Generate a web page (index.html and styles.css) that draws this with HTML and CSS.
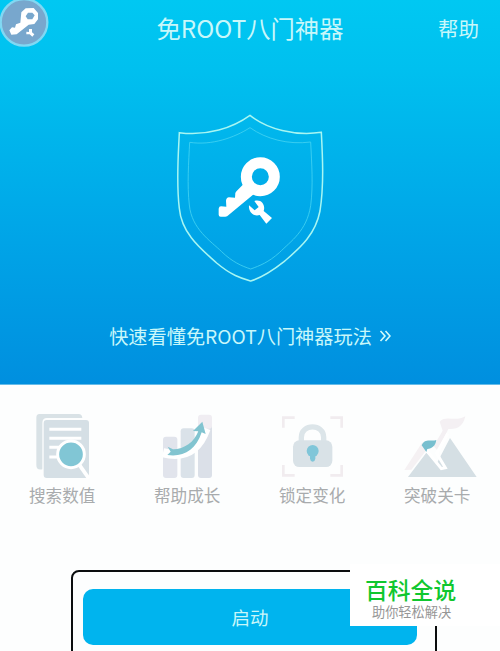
FILE: index.html
```html
<!DOCTYPE html>
<html lang="zh-CN">
<head>
    <meta charset="UTF-8">
    <meta name="viewport" content="width=device-width, initial-scale=1.0">
    <title>免ROOT八门神器</title>
    <link rel="stylesheet" href="styles.css">
</head>
<body>
    <div class="hero">
        <header class="topbar">
            <h1>免ROOT八门神器</h1>
            <a class="help">帮助</a>
        </header>

        <svg class="shield" viewBox="0 0 510 555" fill="none">
            <path d="M255 31C204 68 127 94 43 83C40 150 33 230 43 310C50 390 116 438 155 474C200 512 230 520 257 528C283 520 313 505 357 470C397 435 450 395 465 318C477 240 473 160 469 82C390 94 306 72 255 31Z" stroke="#a8f6f2" stroke-width="4.5"/>
            <path d="M255 68C208 98 140 122 74 112C71 170 66 240 73 300C80 372 137 408 170 440C202 471 230 483 257 492C285 482 310 472 343 443C378 408 425 378 437 302C445 240 440 175 437 111C370 120 303 102 255 68Z" stroke="#43d3f2" stroke-width="2.5"/>
            <circle cx="286" cy="215" r="42" stroke="#fff" stroke-width="33"/>
            <path d="M235 238L266 268L190 331Q187 335 181 335H167Q161 335 161 329V311Q162 304 168 304L184 305L183 287Q184 278 192 277L210 278L211 264Q213 259 218 255Z" fill="#fff"/>
            <path d="M268 288C290 281 302 301 296 318L321 339L304 356L284 330C266 336 250 321 252 301L269 316L281 306Z" fill="#fff"/>
        </svg>

        <a class="guide">快速看懂免ROOT八门神器玩法
            <svg viewBox="0 0 12 12" fill="none"><path d="M1.5 1L6 6L1.5 11M6.5 1L11 6L6.5 11" stroke="#d2fbfa" stroke-width="1.6"/></svg>
        </a>

        <svg class="app-icon" viewBox="0 0 147 141" fill="none">
            <circle cx="72" cy="67" r="70" fill="#78a7cd" stroke="#81d8f3" stroke-width="7"/>
            <path d="M77 25L101 24L114 39V58L103 72L86 74L50 103L34 104L28 91L36 82L45 83L48 73L61 68L64 37Z" fill="#fff"/>
            <path d="M84 38L97 38L104 46L97 58H83L77 49Z" fill="#78a7cd"/>
            <path d="M87 87H96V97L103 103L97 110L89 103H79V95L87 96Z" fill="#fff"/>
        </svg>
    </div>

    <ul class="features">
        <li>
            <svg viewBox="0 0 300 225" fill="none">
                <path d="M58 27H176Q186 27 187 39H81Q67 39 67 54V193Q49 197 49 180V38Q49 27 58 27Z" fill="#d9e2e6"/>
                <rect x="71" y="45" width="136" height="174" rx="9" fill="#d5dfe5"/>
                <path d="M88 73H184M88 100H184M88 127H130M88 156H130" stroke="#fff" stroke-width="9"/>
                <circle cx="153" cy="148" r="40" fill="#81c6d5" stroke="#fff" stroke-width="9"/>
                <path d="M177 178L207 221" stroke="#fff" stroke-width="11"/>
            </svg>
            <span>搜索数值</span>
        </li>
        <li>
            <svg viewBox="0 0 300 225" fill="none">
                <rect x="54" y="95" width="43" height="124" rx="9" fill="#e1e4ec"/>
                <rect x="107" y="70" width="42" height="149" rx="9" fill="#dae2e9"/>
                <rect x="159" y="50" width="42" height="169" rx="9" fill="#dbe0e8"/>
                <rect x="159" y="29" width="42" height="42" rx="9" fill="#f0edf2"/>
                <path d="M54 143C116 158 160 135 183 70" stroke="#fff" stroke-width="28"/>
                <path d="M68 125L84 133C118 133 148 111 160 79L144 78L172 50L182 87L170 82C153 137 113 157 67 150L77 140Z" fill="#82c4d0"/>
            </svg>
            <span>帮助成长</span>
        </li>
        <li>
            <svg viewBox="0 0 300 225" fill="none">
                <path d="M40 68V38H74M181 38H215V68M215 180V211H181M74 211H40V180" stroke="#f1ecef" stroke-width="8"/>
                <path d="M94 112V97C94 55 161 55 161 97V112" stroke="#dce5e9" stroke-width="16"/>
                <rect x="69" y="106" width="118" height="80" rx="19" fill="#d9e2e7"/>
                <circle cx="128" cy="138" r="18" fill="#80c6d9"/>
                <path d="M120 148H136V161Q135 169 128 170Q121 169 120 161Z" fill="#80c6d9"/>
            </svg>
            <span>锁定变化</span>
        </li>
        <li>
            <svg viewBox="0 0 300 225" fill="none">
                <path d="M28 195L82 112L94 136L49 194Z" fill="#f5f1f3"/>
                <path d="M39 216L94 143L126 174L165 99L245 216Z" fill="#d5dfe4"/>
                <path d="M134 50C154 29 180 52 211 34C204 62 191 74 160 72L128 137L116 123L143 77Z" fill="#f4f0f3"/>
                <path d="M96 138L139 191L151 188L125 145L158 86" stroke="#fff" stroke-width="9"/>
                <path d="M80 121C90 98 108 111 124 105C121 124 111 130 97 132L94 141Z" fill="#78bfcf"/>
            </svg>
            <span>突破关卡</span>
        </li>
    </ul>

    <div class="start-frame">
        <button class="start">启动</button>
    </div>

    <div class="brand">
        <strong>百科全说</strong>
        <span>助你轻松解决</span>
    </div>
</body>
</html>
```

FILE: styles.css
```css
* {
    box-sizing: border-box;
}
body {
    position: relative;
    height: 651px;
    margin: 0;
    overflow: hidden;
    background-color: #fdfefe;
    font-family: "Noto Sans CJK SC", sans-serif;
    font-weight: 400;
}
.hero {
    position: relative;
    display: flex;
    flex-direction: column;
    align-items: center;
    height: 385px;
    background: linear-gradient(#00c8f2 0%, #00c0ef 18%, #00a7e8 58%, #008fdf 100%);
    border-bottom: 1px solid #65bce9;
    color: #c8f7fa;
}
.topbar {
    display: grid;
    grid-template-columns: 1fr auto 1fr;
    align-items: center;
    width: 100%;
    height: 56px;
    padding: 0 21px;
}
.topbar h1 {
    grid-column: 2;
    margin: 0;
    font-size: 24.3px;
    font-weight: 400;
    line-height: 36px;
}
.help {
    justify-self: end;
    font-size: 20.5px;
    line-height: 30px;
}
.shield {
    width: 170px;
    height: 185px;
    margin-top: 49px;
}
.guide {
    display: flex;
    align-items: center;
    gap: 7px;
    margin-top: 32px;
    font-size: 19.2px;
    line-height: 28px;
}
.guide svg {
    width: 12px;
    height: 12px;
}
.app-icon {
    position: absolute;
    top: 0;
    left: 0;
    width: 49px;
    height: 47px;
}
.features {
    display: flex;
    gap: 25px;
    margin: 20px 0 0;
    padding: 0 0 0 20px;
    list-style: none;
}
.features li {
    width: 100px;
    flex: none;
}
.features svg {
    display: block;
    width: 100px;
    height: 75px;
}
.features span {
    display: block;
    margin-left: 9px;
    color: #a8abad;
    font-size: 16.6px;
    line-height: 30px;
}
.start-frame {
    width: 366px;
    height: 96px;
    margin: 60px 0 0 71px;
    padding: 17px 17px 0 10px;
    border: 2px solid #0b0d0e;
    border-radius: 8px;
}
.start {
    display: block;
    width: 334px;
    height: 56px;
    padding: 0;
    border: none;
    border-radius: 10px;
    background-color: #00b4ee;
    color: #c8f7fa;
    font-family: inherit;
    font-size: 18.5px;
    font-weight: 400;
}
.brand {
    position: absolute;
    top: 564px;
    left: 350px;
    display: flex;
    flex-direction: column;
    width: 150px;
    height: 62px;
    padding: 14px 0 0 15px;
    background-color: #fff;
}
.brand strong {
    color: #10c72f;
    font-size: 22.8px;
    font-weight: 500;
    line-height: 24px;
}
.brand span {
    margin-left: 7px;
    color: #969696;
    font-size: 13.2px;
    line-height: 20px;
}
```
